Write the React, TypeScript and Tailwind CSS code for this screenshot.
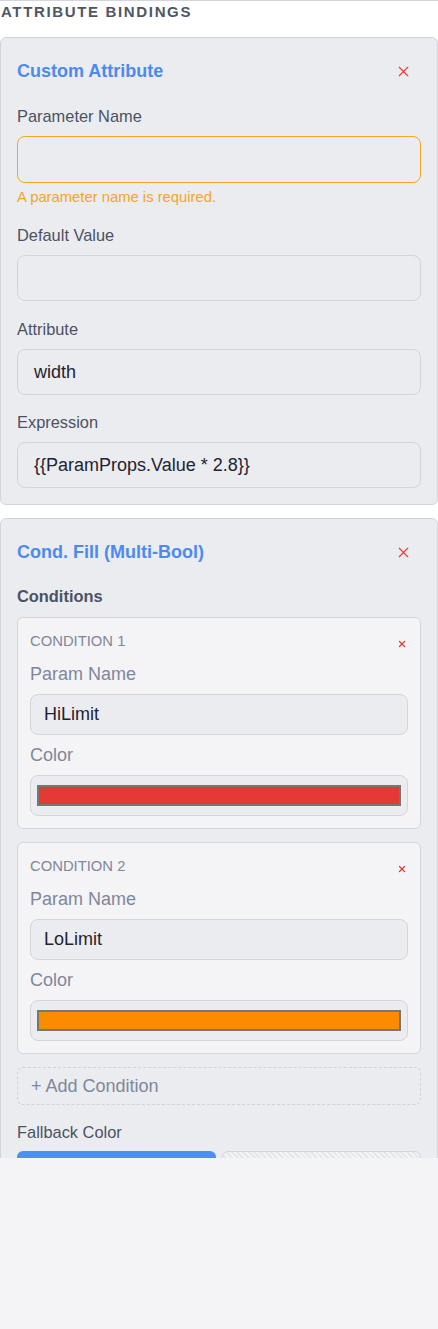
import { X } from "lucide-react";

const fieldLabel = "text-[16.4px] leading-6 text-[#4b5263]";
const inputBox =
  "h-[46px] w-full rounded-lg border border-[#d3d5dc] bg-[#ebecf0] px-4 flex items-center text-[18px] text-[#1f2330]";

function Field({ label, value, gap }: { label: string; value?: string; gap: string }) {
  return (
    <div className={gap}>
      <div className={fieldLabel}>{label}</div>
      <div className={`mt-2 ${inputBox}`}>{value}</div>
    </div>
  );
}

function Condition({ index, name, color }: { index: number; name: string; color: string }) {
  return (
    <div className="rounded-md border border-[#d3d5dc] bg-[#f4f4f6] p-3">
      <div className="flex h-[23px] items-center justify-between">
        <span className="text-[14.8px] uppercase text-[#80879a]">Condition {index}</span>
        <button className="flex w-[12px] items-center justify-center pt-1 text-[#e53935]">
          <X size={10} strokeWidth={3} />
        </button>
      </div>
      <div className="mt-[7px] text-[18px] leading-[28px] text-[#80879a]">Param Name</div>
      <div className="mt-1.5 flex h-[41px] items-center rounded-lg border border-[#d3d5dc] bg-[#ebecf0] px-[13px] text-[18px] text-[#1f2330]">
        {name}
      </div>
      <div className="mt-1.5 text-[18px] leading-[28px] text-[#80879a]">Color</div>
      <div className="mt-1.5 flex h-[41px] items-center rounded-lg border border-[#d3d5dc] bg-[#ebecf0] px-[6px]">
        <div className="h-[21px] w-full border-2 border-[#767676]" style={{ backgroundColor: color }} />
      </div>
    </div>
  );
}

export default function App() {
  return (
    <div className="min-h-screen bg-[#f4f4f6] font-['Liberation_Sans',Arial,sans-serif]">
      <div className="h-[1158px] overflow-hidden border-t border-[#d3d5dc] bg-white">
        <h2 className="pl-px text-[15px] font-bold leading-[22px] tracking-[0.11em] text-[#4f5565]">
          ATTRIBUTE BINDINGS
        </h2>

        <section className="mt-[14px] rounded-md border border-[#d3d5dc] bg-[#ebecf0] px-4 pt-4 pb-4">
          <div className="flex h-[34px] items-center justify-between">
            <h3 className="text-[18px] font-bold text-[#4d8af0]">Custom Attribute</h3>
            <button className="flex w-9 items-center justify-center text-[#e53935]">
              <X size={17} strokeWidth={1.6} />
            </button>
          </div>
          <div className="mt-4">
            <div className={fieldLabel}>Parameter Name</div>
            <div className="mt-2 h-[47px] w-full rounded-lg border border-[#f5a623] bg-[#ebecf0]" />
            <div className="mt-1 text-[14.8px] leading-5 text-[#f5a623]">A parameter name is required.</div>
          </div>
          <Field label="Default Value" gap="mt-4" />
          <Field label="Attribute" value="width" gap="mt-4" />
          <Field label="Expression" value="{{ParamProps.Value * 2.8}}" gap="mt-[15px]" />
        </section>

        <section className="mt-[13px] rounded-md border border-[#d3d5dc] bg-[#ebecf0] px-4 pt-4 pb-4">
          <div className="flex h-[34px] items-center justify-between">
            <h3 className="text-[18px] font-bold text-[#4d8af0]">Cond. Fill (Multi-Bool)</h3>
            <button className="flex w-9 items-center justify-center text-[#e53935]">
              <X size={17} strokeWidth={1.6} />
            </button>
          </div>
          <div className="mt-[15px] text-[16.4px] font-bold leading-6 text-[#4b5263]">Conditions</div>
          <div className="mt-[9px] flex flex-col gap-[13px]">
            <Condition index={1} name="HiLimit" color="#e53935" />
            <Condition index={2} name="LoLimit" color="#fb8c00" />
            <button className="flex h-[38px] items-center rounded-md border border-dashed border-[#cfd2d9] px-[13px] text-[18px] text-[#80879a]">
              + Add Condition
            </button>
          </div>
          <div className="mt-[14px] text-[16.4px] leading-[26px] text-[#4b5263]">Fallback Color</div>
          <div className="mt-1.5 grid grid-cols-2 gap-1.5">
            <div className="h-10 rounded-md bg-[#4f8ef7]" />
            <div className="h-10 rounded-md border border-[#d3d5dc] bg-[repeating-linear-gradient(45deg,#e6e7eb_0_2px,#f3f4f6_2px_4px)]" />
          </div>
        </section>
      </div>
    </div>
  );
}
